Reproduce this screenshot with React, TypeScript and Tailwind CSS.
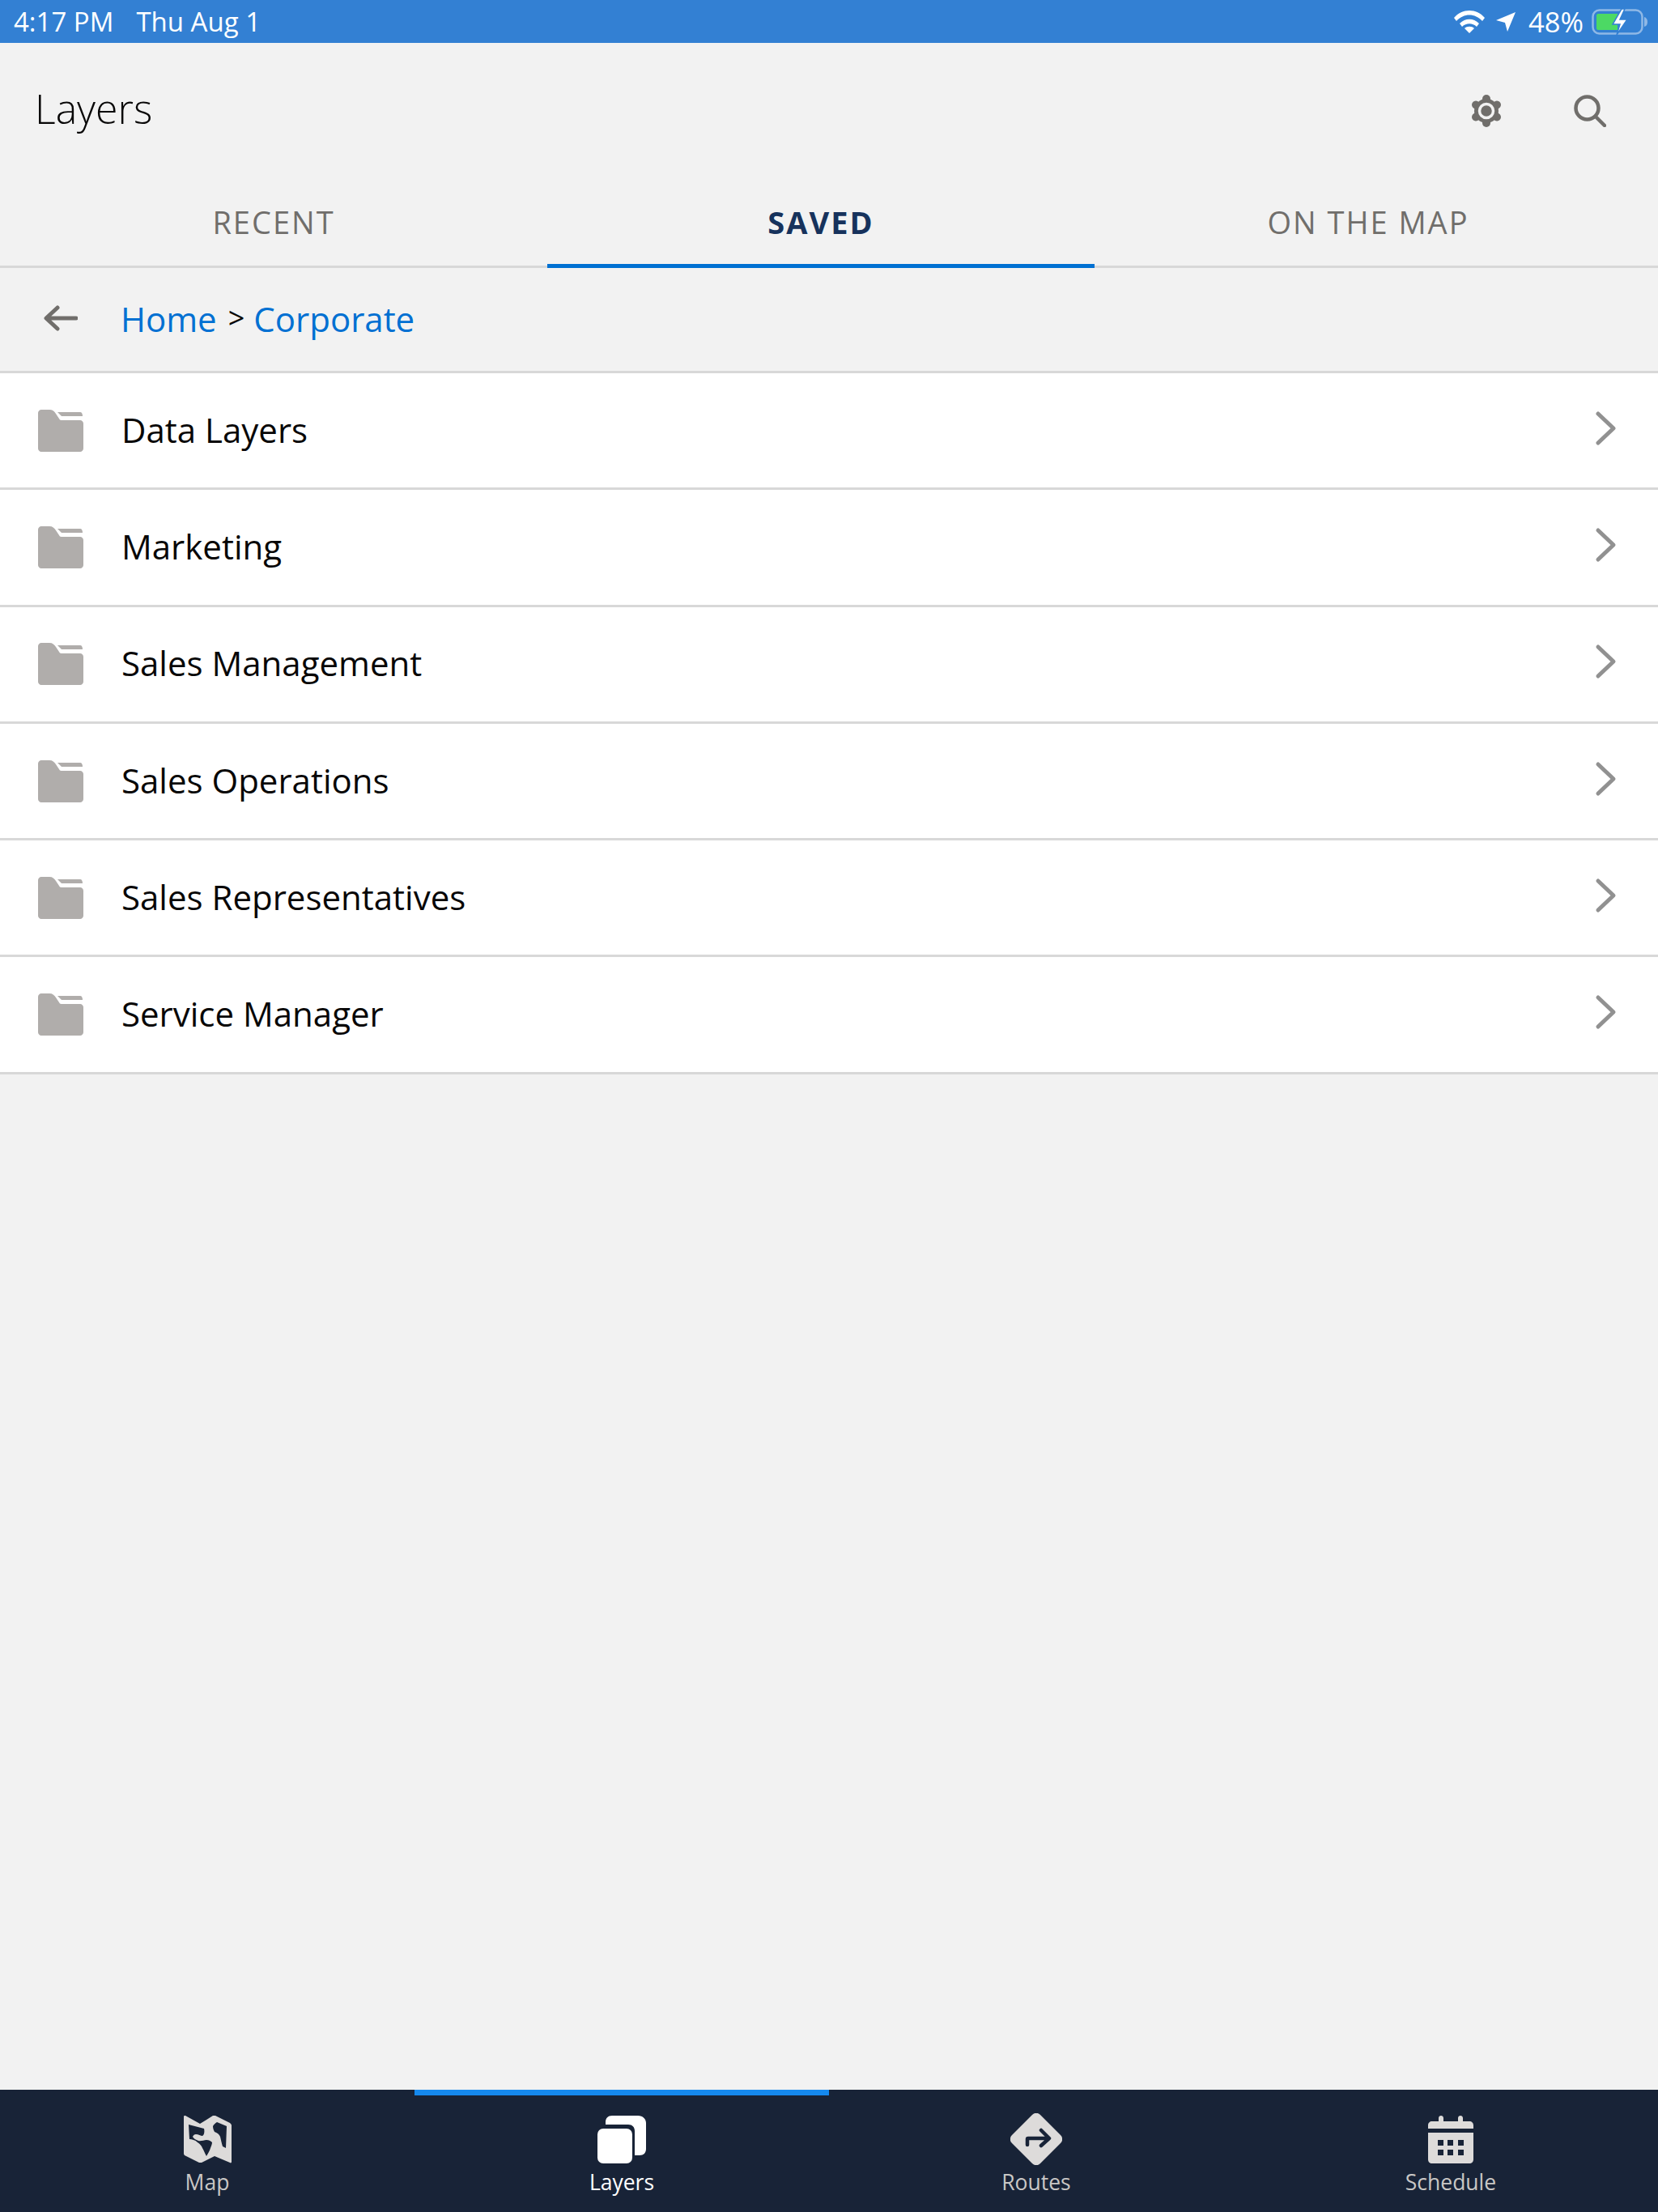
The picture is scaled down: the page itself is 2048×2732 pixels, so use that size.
import { ReactNode } from "react";

const folders = [
  "Data Layers",
  "Marketing",
  "Sales Management",
  "Sales Operations",
  "Sales Representatives",
  "Service Manager",
];

const FolderIcon = () => (
  <svg width="56" height="52" viewBox="0 0 56 52" className="shrink-0">
    <path
      d="M4 0h10c4 0 6 2 8 5l4 6c1 2 2 2 4 2h22c2 0 4 2 4 4v31c0 2-2 4-4 4H4c-2 0-4-2-4-4V4c0-2 2-4 4-4z"
      fill="#b0adab"
    />
    <path d="M24 3h28c2 0 3 2 3 5H29z" fill="#b0adab" />
  </svg>
);

const ChevronIcon = () => (
  <svg width="28" height="44" viewBox="0 0 28 44" fill="none" className="shrink-0 mb-[6px]">
    <path d="M4 4l19 18L4 40" stroke="#919191" strokeWidth="5" strokeLinecap="round" strokeLinejoin="round" />
  </svg>
);

const MapIcon = () => (
  <svg width="59" height="59" viewBox="0 0 59 59">
    <path
      fillRule="evenodd"
      fill="#dddbda"
      strokeLinejoin="round"
      d="M2 0l18 10L36 0c1-1 2-1 3 0l18 9c1 1 2 2 2 3v45c0 1-1 2-2 1l-19-8-16 8c-1 0-2 0-3 0L1 49c-1-1-1-2-1-3V2c0-2 1-3 2-2zM6 11l1 18c3 0 7 1 10 4 3 2 5 4 6 7 2 3 3 7 5 10 2-3 4-7 5-10 1-3 2-5 2-7-2-2-4-3-7-3-3 0-7 2-10 1-3-1-6-3-7-5 1-2 2-3 4-3 3 0 6 2 8 2 2-1 3-5 2-9L6 11zM41 8c-2 1-4 3-5 5 0 3 1 5 2 7 3 1 6 3 7 6 1 4 2 9 3 12l4 2 1-27z"
    />
  </svg>
);

const LayersIcon = () => (
  <svg width="60" height="59" viewBox="0 0 60 59" fill="#ffffff">
    <path d="M10 11V8c0-5 3-8 8-8h32c6 0 10 4 10 9v32c0 5-3 8-8 8h-6V19c0-5-3-8-8-8z" />
    <rect x="0" y="16" width="43" height="43" rx="7" />
  </svg>
);

const RoutesIcon = () => (
  <svg width="64" height="64" viewBox="0 0 64 64">
    <path d="M27 2c3-3 7-3 10 0l25 25c3 3 3 7 0 10L37 62c-3 3-7 3-10 0L2 37c-3-3-3-7 0-10z" fill="#dddbda" />
    <path d="M21 39v-7c0-1 0-1 1-1h25M38 21l10 10-10 9" fill="none" stroke="#182337" strokeWidth="4.5" strokeLinecap="round" strokeLinejoin="round" />
  </svg>
);

const ScheduleIcon = () => (
  <svg width="56" height="59" viewBox="0 0 56 59" fill="#dddbda">
    <path d="M13 3c0-4 6-4 6 0v4h18V3c0-4 6-4 6 0v4h8c3 0 5 2 5 5v4H0v-4c0-3 2-5 5-5h8z" />
    <path
      fillRule="evenodd"
      d="M0 21h56v33c0 3-2 5-5 5H5c-3 0-5-2-5-5zm12 9v7h7v-7zm12 0v7h7v-7zm13 0v7h7v-7zM12 42v7h7v-7zm12 0v7h7v-7zm13 0v7h7v-7z"
    />
  </svg>
);

const GearIcon = () => (
  <svg width="40" height="40" viewBox="0 0 40 40" fill="#706e6b">
    <circle cx="20" cy="20" r="15" />
    <rect x="15" y="0" width="10" height="40" rx="5" />
    <rect x="15" y="0" width="10" height="40" rx="5" transform="rotate(60 20 20)" />
    <rect x="15" y="0" width="10" height="40" rx="5" transform="rotate(120 20 20)" />
    <circle cx="20" cy="20" r="8.5" fill="#706e6b" stroke="#f2f2f2" strokeWidth="3.5" />
  </svg>
);

const Tab = ({ label, active }: { label: string; active?: boolean }) => (
  <div
    className={`w-[676px] h-[114px] -mb-[3px] flex items-center justify-center pt-[5px] text-[38px] tracking-[2px] border-b-[5px] ${
      active ? "border-[#0070d2] text-[#16325c] font-bold" : "border-transparent text-[#706e6b]"
    }`}
  >
    {label}
  </div>
);

const NavItem = ({ label, icon, active }: { label: string; icon: ReactNode; active?: boolean }) => (
  <div
    className={`flex-1 h-full flex flex-col items-center border-t-[7px] ${
      active ? "border-[#1589ee] text-white" : "border-transparent text-[#c9c7c5]"
    }`}
  >
    <div className="h-[66px] mt-[21px] flex items-center justify-center">{icon}</div>
    <div className="text-[26.5px] leading-[36px] mt-[2px]">{label}</div>
  </div>
);

export default function App() {
  return (
    <div className="w-[2048px] h-[2732px] flex flex-col bg-[#f2f2f2] font-['Open_Sans',sans-serif] overflow-hidden">
      {/* status bar */}
      <div className="h-[53px] shrink-0 bg-[#3380d3] flex items-center justify-between pl-[17px] pr-[12px] text-white text-[33px]">
        <div className="flex gap-[28px]">
          <span>4:17 PM</span>
          <span>Thu Aug 1</span>
        </div>
        <div className="flex items-center">
          <svg width="38" height="28" viewBox="0 0 38 28" fill="#ffffff">
            <path d="M0 9C10-3 28-3 38 9l-3 4C26 3 12 3 3 13z" />
            <path d="M7 16c7-7 17-7 24 0l-3 4c-5-5-13-5-18 0z" />
            <path d="M13 22c3-3 9-3 12 0l-6 6z" />
          </svg>
          <svg width="24" height="24" viewBox="0 0 24 24" fill="#ffffff" className="ml-[14px]">
            <path d="M24 0L14 24l-3-11L0 10z" />
          </svg>
          <span className="ml-[16px] text-[34.5px]">48%</span>
          <svg width="70" height="32" viewBox="0 0 70 32" className="ml-[10px]">
            <rect x="1.5" y="1.5" width="61" height="29" rx="8" fill="none" stroke="#8fb8e6" strokeWidth="2.5" />
            <path d="M65 10c3 1 4 3 4 6s-1 5-4 6z" fill="#8fb8e6" />
            <path d="M6 8c0-1 1-2 2-2h24v20H8c-1 0-2-1-2-2z" fill="#4cd964" />
            <path d="M37 0L26 19h9l-4 13 13-19h-9l6-13z" fill="#ffffff" stroke="#3380d3" strokeWidth="1.5" />
          </svg>
        </div>
      </div>

      {/* header */}
      <div className="h-[164px] shrink-0 flex items-center justify-between pl-[43px] pr-[64px] pb-[2px]">
        <div className="text-[50px] font-light text-[#080707]">Layers</div>
        <div className="flex items-center gap-[88px] pt-[6px]">
          <GearIcon />
          <svg width="40" height="40" viewBox="0 0 40 40" fill="none" stroke="#706e6b" strokeWidth="4.5" strokeLinecap="round">
            <circle cx="16.5" cy="16.5" r="14" />
            <path d="M27 27l11 11" />
          </svg>
        </div>
      </div>

      {/* tabs */}
      <div className="h-[114px] shrink-0 flex items-end border-b-[3px] border-[#d8d8d8]">
        <Tab label="RECENT" />
        <Tab label="SAVED" active />
        <Tab label="ON THE MAP" />
      </div>

      {/* breadcrumb */}
      <div className="h-[130px] shrink-0 flex items-center pl-[54px] pb-[3px] border-b-[3px] border-[#d8d8d8] text-[42px]">
        <svg width="42" height="32" viewBox="0 0 42 32" fill="none" stroke="#706e6b" strokeWidth="5" strokeLinecap="round" strokeLinejoin="round">
          <path d="M40 16H4M17 3L3 16l14 13" />
        </svg>
        <span className="ml-[53px] text-[#0070d2]">Home</span>
        <span className="ml-[14px] text-[#080707] text-[36px]">&gt;</span>
        <span className="ml-[11px] text-[#0070d2]">Corporate</span>
      </div>

      {/* folder rows */}
      <div className="shrink-0 bg-white">
        {folders.map((name) => (
          <div
            key={name}
            className="h-[144.3px] flex items-center pl-[47px] pr-[50px] border-b-[3px] border-[#d8d8d8]"
          >
            <FolderIcon />
            <div className="ml-[47px] flex-1 pb-[3px] text-[42px] text-[#080707]">{name}</div>
            <ChevronIcon />
          </div>
        ))}
      </div>

      <div className="flex-1" />

      {/* bottom nav */}
      <div className="h-[151px] shrink-0 bg-[#182337] flex">
        <NavItem label="Map" icon={<MapIcon />} />
        <NavItem label="Layers" icon={<LayersIcon />} active />
        <NavItem label="Routes" icon={<RoutesIcon />} />
        <NavItem label="Schedule" icon={<ScheduleIcon />} />
      </div>
    </div>
  );
}
